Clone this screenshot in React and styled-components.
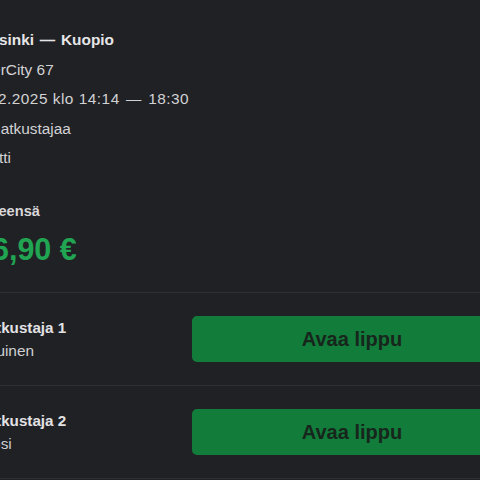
import styled, { createGlobalStyle } from 'styled-components';

const Global = createGlobalStyle`
  html, body {
    margin: 0;
    padding: 0;
    background: #202125;
    overflow: hidden;
  }
  body {
    font-family: "Liberation Sans", Arial, sans-serif;
    color: #d4d4d6;
  }
`;

const Page = styled.div`
  width: 537px;
  margin-left: -25px;
  min-height: 480px;
  background: #202125;
`;

const Info = styled.section`
  display: flex;
  flex-direction: column;
  gap: 9.5px;
  padding-top: 30px;
`;

const Line = styled.div`
  font-size: 15.4px;
  line-height: 20px;
  white-space: nowrap;
  letter-spacing: ${p => (p.$digits ? '0.5px' : '0')};
  font-weight: ${p => (p.$bold ? 700 : 400)};
  color: ${p => (p.$bold ? '#e6e6e8' : '#d2d2d4')};
`;

const Dash = styled.span`
  margin: 0 1.5px;
`;

const Summary = styled.section`
  display: flex;
  flex-direction: column;
  gap: 11px;
  padding-top: 33px;
  padding-bottom: 26px;
  border-bottom: 1px solid #2e2f33;
`;

const Label = styled.div`
  font-size: 14.6px;
  line-height: 20px;
  font-weight: 700;
  color: #d8d8da;
`;

const Price = styled.div`
  font-size: 30.5px;
  line-height: 34px;
  font-weight: 700;
  color: #21a552;
  white-space: nowrap;
`;

const Row = styled.div`
  display: flex;
  align-items: center;
  justify-content: space-between;
  padding: 23px 0;
  border-bottom: 1px solid #2e2f33;
`;

const Traveller = styled.div`
  display: flex;
  flex-direction: column;
  gap: 3px;
  white-space: nowrap;
`;

const Name = styled.div`
  font-size: 15.2px;
  line-height: 20px;
  font-weight: 700;
  color: #e2e2e4;
`;

const Kind = styled.div`
  font-size: 15.4px;
  line-height: 20px;
  color: #cfcfd1;
`;

const OpenButton = styled.button`
  width: 320px;
  height: 46px;
  border: none;
  border-radius: 5px;
  background: #127c3a;
  color: #17261c;
  font-family: "Liberation Sans", Arial, sans-serif;
  font-size: 20px;
  font-weight: 700;
  cursor: pointer;
`;

const travellers = [
  { name: 'Matkustaja 1', kind: 'Aikuinen' },
  { name: 'Matkustaja 2', kind: 'Lapsi' },
];

export default function App() {
  return (
    <>
      <Global />
      <Page>
        <Info>
          <Line $bold>Helsinki <Dash>—</Dash> Kuopio</Line>
          <Line>InterCity 67</Line>
          <Line $digits>1.12.2025 klo 14:14 <Dash>—</Dash> 18:30</Line>
          <Line>2 matkustajaa</Line>
          <Line>Kortti</Line>
        </Info>
        <Summary>
          <Label>Yhteensä</Label>
          <Price>16,90 €</Price>
        </Summary>
        {travellers.map(t => (
          <Row key={t.name}>
            <Traveller>
              <Name>{t.name}</Name>
              <Kind>{t.kind}</Kind>
            </Traveller>
            <OpenButton>Avaa lippu</OpenButton>
          </Row>
        ))}
      </Page>
    </>
  );
}
